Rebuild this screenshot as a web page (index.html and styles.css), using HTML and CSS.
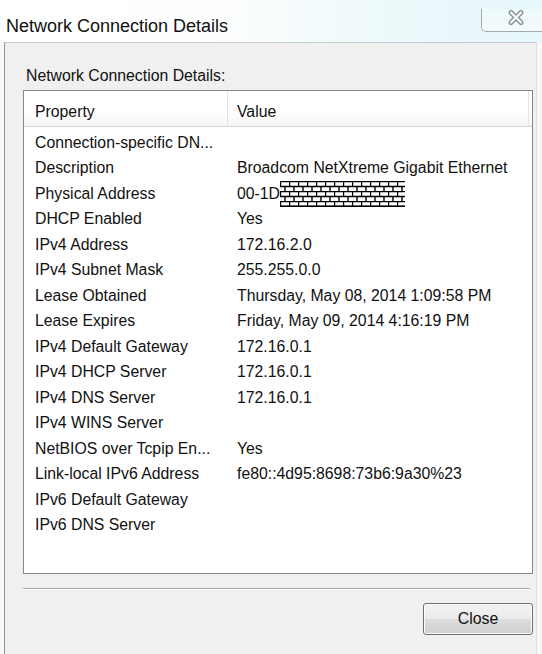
FILE: index.html
```html
<!DOCTYPE html>
<html lang="en">
<head>
<meta charset="utf-8">
<title>Network Connection Details</title>
<link rel="stylesheet" href="styles.css">
</head>
<body>
<div class="window">
  <div class="titlebar">
    <span class="title">Network Connection Details</span>
    <div class="close-btn">
      <svg class="close-x" width="18" height="17" viewBox="0 0 18 17">
        <path d="M4 3.5 L14 13.5 M14 3.5 L4 13.5" stroke="#8a9095" stroke-width="5" stroke-linecap="round" fill="none"/>
        <path d="M4 3.5 L14 13.5 M14 3.5 L4 13.5" stroke="#f6f7f8" stroke-width="2.4" stroke-linecap="round" fill="none"/>
      </svg>
    </div>
  </div>
  <div class="client">
    <div class="label">Network Connection Details:</div>
    <div class="listview">
      <div class="lv-header">
        <div class="hcell hprop">Property</div>
        <div class="hcell hval">Value</div>
      </div>
      <div class="lv-body">
        <div class="row"><div class="c-prop">Connection-specific DN...</div><div class="c-val"></div></div>
        <div class="row"><div class="c-prop">Description</div><div class="c-val">Broadcom NetXtreme Gigabit Ethernet</div></div>
        <div class="row"><div class="c-prop">Physical Address</div><div class="c-val"><span>00-1D</span><svg class="bricks" width="125" height="26" viewBox="0 0 125 26"><defs><pattern id="brick" width="9" height="10" patternUnits="userSpaceOnUse"><path d="M0 0.5H9 M0 5.5H9 M0.5 0V5.5 M5 5.5V10" stroke="#000" stroke-width="1.4" fill="none"/></pattern></defs><rect x="0" y="0" width="125" height="26" fill="#fff"/><rect x="0" y="0" width="125" height="26" fill="url(#brick)"/><path d="M0 25.3H125" stroke="#000" stroke-width="1.4"/></svg></div></div>
        <div class="row"><div class="c-prop">DHCP Enabled</div><div class="c-val">Yes</div></div>
        <div class="row"><div class="c-prop">IPv4 Address</div><div class="c-val">172.16.2.0</div></div>
        <div class="row"><div class="c-prop">IPv4 Subnet Mask</div><div class="c-val">255.255.0.0</div></div>
        <div class="row"><div class="c-prop">Lease Obtained</div><div class="c-val">Thursday, May 08, 2014 1:09:58 PM</div></div>
        <div class="row"><div class="c-prop">Lease Expires</div><div class="c-val">Friday, May 09, 2014 4:16:19 PM</div></div>
        <div class="row"><div class="c-prop">IPv4 Default Gateway</div><div class="c-val">172.16.0.1</div></div>
        <div class="row"><div class="c-prop">IPv4 DHCP Server</div><div class="c-val">172.16.0.1</div></div>
        <div class="row"><div class="c-prop">IPv4 DNS Server</div><div class="c-val">172.16.0.1</div></div>
        <div class="row"><div class="c-prop">IPv4 WINS Server</div><div class="c-val"></div></div>
        <div class="row"><div class="c-prop">NetBIOS over Tcpip En...</div><div class="c-val">Yes</div></div>
        <div class="row"><div class="c-prop">Link-local IPv6 Address</div><div class="c-val">fe80::4d95:8698:73b6:9a30%23</div></div>
        <div class="row"><div class="c-prop">IPv6 Default Gateway</div><div class="c-val"></div></div>
        <div class="row"><div class="c-prop">IPv6 DNS Server</div><div class="c-val"></div></div>
      </div>
    </div>
    <div class="separator"></div>
    <div class="footer">
      <button class="btn" type="button">Close</button>
    </div>
  </div>
</div>
</body>
</html>
```

FILE: styles.css
```css
html, body {
  margin: 0;
  padding: 0;
  height: 100%;
}

body {
  background: #f7f9fa;
  font-family: "Liberation Sans", Arial, sans-serif;
  color: #000;
  overflow: hidden;
}

.window {
  width: 542px;
  height: 654px;
  display: flex;
  flex-direction: column;
}

.titlebar {
  flex: none;
  height: 42px;
  display: flex;
  align-items: flex-start;
  background: linear-gradient(to right, #ffffff 0%, #fdfefe 40%, #eef9fb 70%, #e6f6fa 100%);
}

.title {
  font-size: 18px;
  line-height: 20px;
  margin: 16px 0 0 6px;
  white-space: nowrap;
  color: #111;
}

.close-btn {
  margin-left: auto;
  margin-top: 9px;
  margin-right: -20px;
  width: 81px;
  height: 23px;
  box-sizing: border-box;
  border-left: 1px solid #a2adb3;
  border-bottom: 1px solid #a2adb3;
  border-bottom-left-radius: 5px;
  background: linear-gradient(#eefafc, #f3fbfd);
  padding-left: 25px;
  padding-top: 0;
}

.close-x {
  display: block;
}

.client {
  flex: 1;
  width: 533px;
  margin-left: 4px;
  box-sizing: border-box;
  border-left: 1px solid #939393;
  border-top: 1px solid #c5cbce;
  border-right: 1px solid #dde1e3;
  background: #f0f0f0;
  padding: 0 3px 0 18px;
}

.label {
  font-size: 15.8px;
  line-height: 18px;
  margin-top: 24px;
  padding-left: 3px;
  white-space: nowrap;
  color: #111;
}

.listview {
  margin-top: 5px;
  height: 484px;
  box-sizing: border-box;
  border: 1px solid #828790;
  background: #fff;
}

.lv-header {
  display: grid;
  grid-template-columns: 204px 301px;
  height: 36px;
  box-sizing: border-box;
  border-bottom: 1px solid #d5d5d5;
  background: linear-gradient(#ffffff 0%, #ffffff 55%, #f4f5f7 100%);
}

.hcell {
  display: flex;
  align-items: center;
  font-size: 15.8px;
  padding-top: 6px;
  box-sizing: border-box;
  border-right: 1px solid #e3e4e6;
  white-space: nowrap;
  color: #111;
}

.hprop {
  padding-left: 11px;
}

.hval {
  padding-left: 9px;
}

.lv-body {
  padding-top: 3px;
}

.row {
  display: grid;
  grid-template-columns: 204px 1fr;
  height: 25.5px;
  align-items: center;
  font-size: 15.8px;
  white-space: nowrap;
  color: #111;
}

.c-prop {
  padding-left: 11px;
}

.c-val {
  padding-left: 9px;
  display: flex;
  align-items: center;
  height: 100%;
}

.bricks {
  display: block;
  flex: none;
  margin-left: 0;
}

.separator {
  margin-top: 14px;
  width: 507px;
  height: 0;
  border-top: 1px solid #a9a9a9;
  border-bottom: 1px solid #ffffff;
}

.footer {
  display: flex;
  justify-content: flex-end;
  margin-top: 13px;
}

.btn {
  width: 110px;
  height: 32px;
  box-sizing: border-box;
  border: 1px solid #707070;
  border-radius: 3px;
  background: linear-gradient(#f2f2f2 0%, #ebebeb 50%, #dddddd 51%, #cfcfcf 100%);
  box-shadow: inset 0 0 0 1px #fbfbfb;
  font-family: "Liberation Sans", Arial, sans-serif;
  font-size: 15.8px;
  color: #111;
  padding: 0;
}
```
